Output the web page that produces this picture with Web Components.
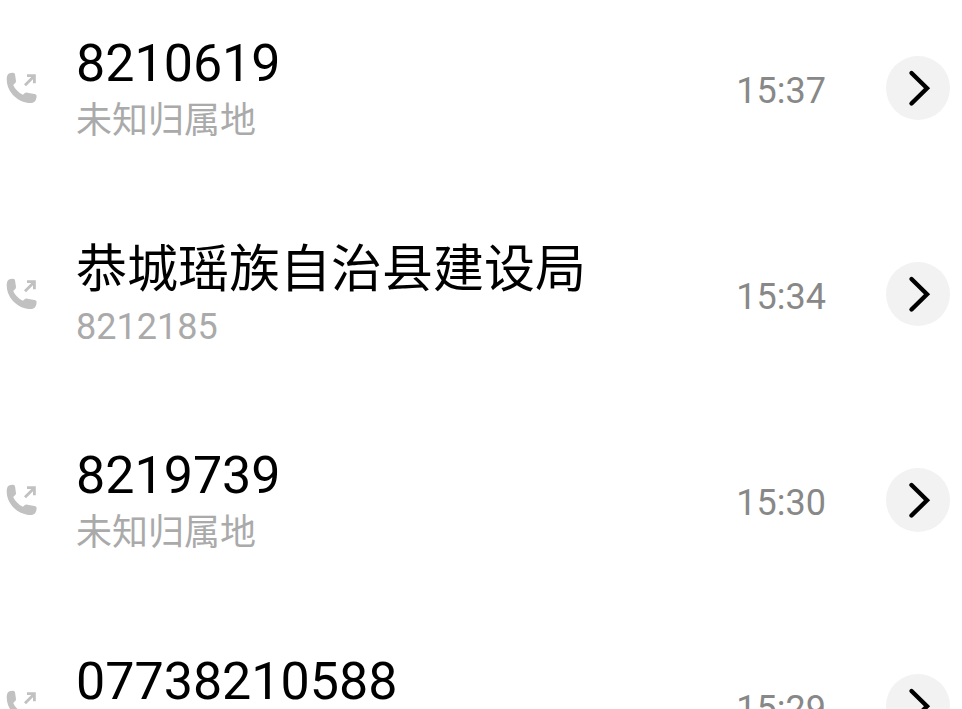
<!DOCTYPE html>
<html lang="zh-CN">
<head>
<meta charset="utf-8">
<meta name="viewport" content="width=device-width, initial-scale=1">
<title>通话记录</title>
<style>
  body {
    margin: 0;
    background: #fff;
    color: #000;
    font-family: Roboto, "Noto Sans CJK SC", sans-serif;
  }
</style>
</head>
<body>
<call-list>
  <call-entry time="15:37">
    <span slot="name">8210619</span>
    <span slot="detail">未知归属地</span>
  </call-entry>
  <call-entry time="15:34">
    <span slot="name">恭城瑶族自治县建设局</span>
    <span slot="detail">8212185</span>
  </call-entry>
  <call-entry time="15:30">
    <span slot="name">8219739</span>
    <span slot="detail">未知归属地</span>
  </call-entry>
  <call-entry time="15:29">
    <span slot="name">07738210588</span>
    <span slot="detail">未知归属地</span>
  </call-entry>
</call-list>

<script>
class OutgoingIcon extends HTMLElement {
  constructor() {
    super();
    this.attachShadow({ mode: "open" });
  }

  connectedCallback() {
    this.shadowRoot.innerHTML = /* HTML */ `
      <style>
        :host {
          display: block;
          flex: none;
          width: 32px;
          height: 32px;
          color: #c1c1c1;
        }
        svg {
          display: block;
        }
      </style>
      <svg width="32" height="32" viewBox="0 0 32 32" fill="none" aria-hidden="true">
        <path fill="currentColor" d="M3 1.6C4.5.8 6.3.7 7.7.9C8.7 1.1 9 1.9 9.1 2.9L9.9 8.3C10.1 9.7 9.9 10.5 9 11.3L7.2 13.1C9 17.2 12.4 20.7 16.9 22.8L18.6 21.3C19.4 20.6 20.3 20.5 21.4 20.7L28.3 22C29.9 22.3 30.7 23 30.6 24.3C30.5 26.5 30 28.4 28.6 29.8C27.2 31 24.6 31.2 22.2 30.9C16.5 30.2 10.5 27.2 6.3 22.2C2.500 17.7.6 12.3.7 7C.8 4.500 1.5 2.400 3 1.600Z"/>
        <path stroke="currentColor" stroke-width="2.8" d="M19 13.2L28.5 3.7M21 3.700H28.400V11.300"/>
      </svg>
    `;
  }
}

class DetailButton extends HTMLElement {
  constructor() {
    super();
    this.attachShadow({ mode: "open" });
  }

  connectedCallback() {
    this.shadowRoot.innerHTML = /* HTML */ `
      <style>
        :host {
          display: block;
          flex: none;
        }
        button {
          display: block;
          width: 64px;
          height: 64px;
          padding: 0;
          border: 0;
          border-radius: 50%;
          background: #f2f2f2;
          color: #000;
          cursor: pointer;
        }
        svg {
          display: block;
        }
      </style>
      <button type="button" aria-label="详情">
        <svg width="64" height="64" viewBox="0 0 64 64" fill="none" aria-hidden="true">
          <path stroke="currentColor" stroke-width="4.4" stroke-linecap="round" d="M25.500 17L41 32.200L25.500 47.500"/>
        </svg>
      </button>
    `;
  }
}

class CallEntry extends HTMLElement {
  constructor() {
    super();
    this.attachShadow({ mode: "open" });
  }

  connectedCallback() {
    this.shadowRoot.innerHTML = /* HTML */ `
      <style>
        :host {
          display: flex;
          align-items: center;
          padding: 0 12px 0 6px;
        }
        .text {
          flex: 1;
          min-width: 0;
          margin-left: 38px;
          padding-top: 6px;
          white-space: nowrap;
        }
        .name {
          font-size: 52px;
          line-height: 60px;
        }
        .name.han {
          font-size: 51px;
        }
        .detail,
        time {
          font-size: 36px;
          line-height: 54px;
        }
        .detail {
          color: #aaa;
        }
        time {
          margin-right: 60px;
          padding-top: 6px;
          color: #888;
        }
      </style>
      <outgoing-icon></outgoing-icon>
      <div class="text">
        <div class="name"><slot name="name"></slot></div>
        <div class="detail"><slot name="detail"></slot></div>
      </div>
      <time></time>
      <detail-button></detail-button>
    `;

    const time = this.getAttribute("time");
    this.shadowRoot.querySelector("time").textContent = time;

    // contact names are set slightly smaller than bare numbers
    const name = this.querySelector("[slot=name]").textContent;
    this.shadowRoot.querySelector(".name").classList.toggle("han", /\D/.test(name));
  }
}

class CallList extends HTMLElement {
  constructor() {
    super();
    this.attachShadow({ mode: "open" });
  }

  connectedCallback() {
    this.shadowRoot.innerHTML = /* HTML */ `
      <style>
        :host {
          display: flex;
          flex-direction: column;
          gap: 86px;
          padding: 28px 0;
        }
      </style>
      <slot></slot>
    `;
  }
}

customElements.define("outgoing-icon", OutgoingIcon);
customElements.define("detail-button", DetailButton);
customElements.define("call-entry", CallEntry);
customElements.define("call-list", CallList);
</script>
</body>
</html>
